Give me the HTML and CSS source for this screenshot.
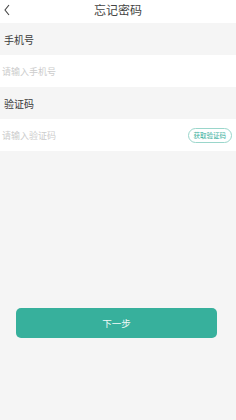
FILE: index.html
```html
<!DOCTYPE html>
<html lang="zh">
<head>
    <meta charset="UTF-8">
    <meta name="viewport" content="width=device-width, initial-scale=1.0">
    <title>忘记密码</title>
    <link rel="stylesheet" href="styles.css">
</head>
<body>
    <div class="page">
        <div class="header">
            <svg class="back" width="8" height="12" viewBox="0 0 8 12">
                <path d="M6 1 L2 6 L6 11" fill="none" stroke="#444" stroke-width="1.1"/>
            </svg>
            <span class="title">忘记密码</span>
        </div>

        <div class="label">手机号</div>
        <div class="field">
            <span class="placeholder">请输入手机号</span>
        </div>

        <div class="label">验证码</div>
        <div class="field">
            <span class="placeholder">请输入验证码</span>
            <span class="code-btn">获取验证码</span>
        </div>

        <div class="actions">
            <button class="next-btn">下一步</button>
        </div>
    </div>
</body>
</html>
```

FILE: styles.css
```css
body {
    margin: 0;
    background: #f5f5f5;
    font-family: "Noto Sans CJK SC", "Noto Sans", sans-serif;
}

.page {
    display: flex;
    flex-direction: column;
    width: 236px;
    height: 420px;
}

.header {
    display: flex;
    align-items: center;
    justify-content: center;
    position: relative;
    height: 23px;
    background: #fff;
}

.back {
    position: absolute;
    left: 3px;
    top: 4px;
}

.title {
    font-size: 12px;
    color: #444;
    margin-top: -4px;
}

.label {
    display: flex;
    align-items: center;
    height: 32px;
    padding-left: 4px;
    font-size: 10px;
    color: #3a3a3a;
}

.field {
    display: flex;
    align-items: center;
    justify-content: space-between;
    height: 32px;
    padding: 0 4px 0 2px;
    background: #fff;
}

.placeholder {
    font-size: 9px;
    color: #cccccc;
}

.code-btn {
    font-size: 6.5px;
    color: #37b09c;
    border: 1px solid #9ad6cb;
    border-radius: 8px;
    padding: 1px 5px;
    line-height: 11px;
}

.actions {
    display: flex;
    justify-content: center;
    padding-top: 157px;
}

.next-btn {
    width: 201px;
    height: 30px;
    margin-left: -3px;
    background: #37b09c;
    border: none;
    border-radius: 5px;
    color: #f2fbf9;
    font-family: "Noto Sans CJK SC", sans-serif;
    font-size: 9.5px;
}
```
